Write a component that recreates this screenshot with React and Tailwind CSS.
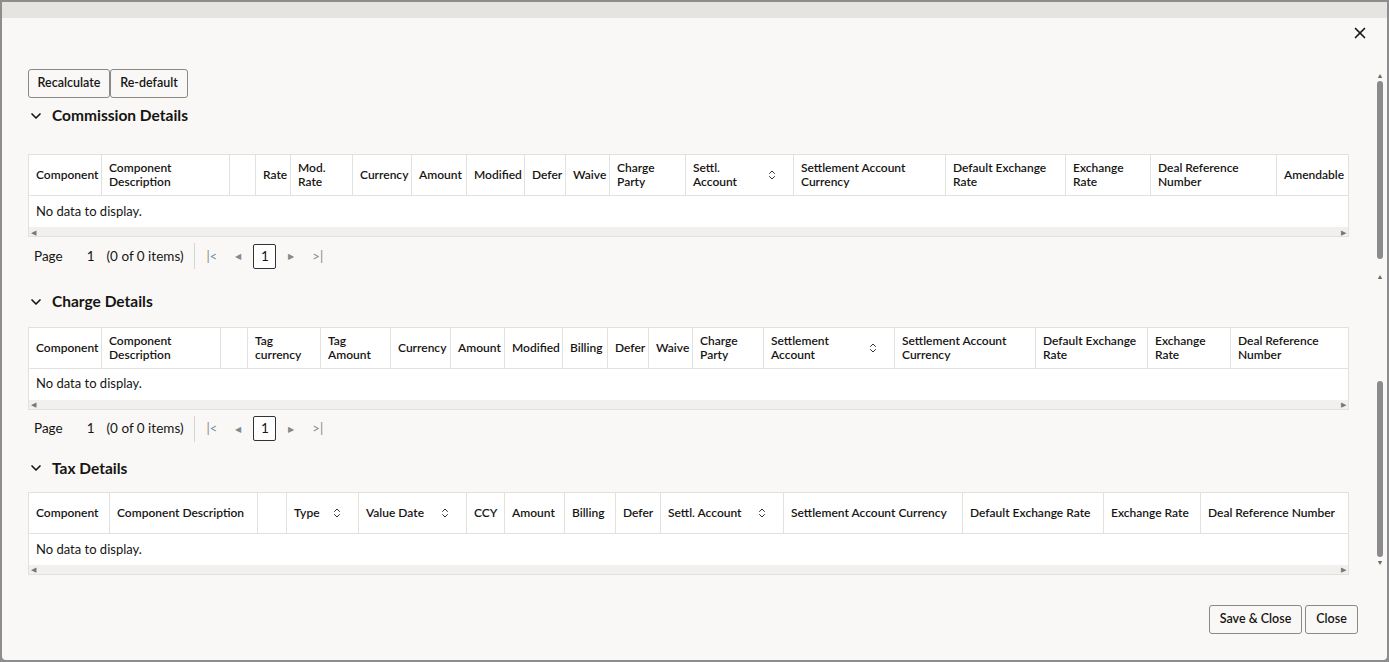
import { ChevronDown, X, ChevronsUpDown } from 'lucide-react'

const COMMISSION = [
  ['Component', 73], ['Component Description', 128], ['', 26], ['Rate', 35, 'r'], ['Mod. Rate', 62],
  ['Currency', 59], ['Amount', 55], ['Modified', 58], ['Defer', 41], ['Waive', 44],
  ['Charge Party', 76], ['Settl. Account', 108, 's'], ['Settlement Account Currency', 152],
  ['Default Exchange Rate', 120], ['Exchange Rate', 85], ['Deal Reference Number', 126], ['Amendable', 71],
]
const CHARGE = [
  ['Component', 73], ['Component Description', 119], ['', 27], ['Tag currency', 73], ['Tag Amount', 70],
  ['Currency', 60], ['Amount', 54], ['Modified', 58], ['Billing', 45], ['Defer', 41], ['Waive', 44],
  ['Charge Party', 71], ['Settlement Account', 131, 's'], ['Settlement Account Currency', 141],
  ['Default Exchange Rate', 112], ['Exchange Rate', 83], ['Deal Reference Number', 117],
]
const TAX = [
  ['Component', 81], ['Component Description', 148], ['', 29], ['Type', 72, 's'], ['Value Date', 108, 's'],
  ['CCY', 38], ['Amount', 60], ['Billing', 51], ['Defer', 45], ['Settl. Account', 123, 's'],
  ['Settlement Account Currency', 179], ['Default Exchange Rate', 141], ['Exchange Rate', 97],
  ['Deal Reference Number', 147],
]

function Grid({ cols, wrap }) {
  return (
    <div className="ml-[26px] w-[1321px] bg-white border border-[#e3e1de]">
      <div className="flex h-[41px] border-b border-[#e3e1de]">
        {cols.map(([label, w, f], i) => (
          <div key={i} style={{ width: w }}
            className={`shrink-0 flex items-center px-[7px] text-[12px] font-semibold leading-[14px] text-[#161513] ${i < cols.length - 1 ? 'border-r border-[#e3e1de]' : ''}`}>
            <span className={`${wrap ? '' : 'whitespace-nowrap'} flex-1 ${f === 'r' ? 'text-right' : ''}`}>{label}</span>
            {f === 's' && <ChevronsUpDown size={12} strokeWidth={2} className="text-[#333] mr-[8px]" />}
          </div>
        ))}
      </div>
      <div className="h-[31px] flex items-center px-[7px] text-[13px] text-[#161513]">No data to display.</div>
      <div className="h-[9px] bg-[#f1f0ee] flex items-center justify-between px-[2px] text-[7px] text-[#777]">
        <span>◀</span><span>▶</span>
      </div>
    </div>
  )
}

function Pager() {
  return (
    <div className="ml-[32px] mt-[6px] flex items-center h-[26px] text-[13.5px] text-[#161513]">
      <span>Page</span>
      <span className="ml-[24px]">1</span>
      <span className="ml-[12px] pr-[10px] border-r border-[#d6d4d1] h-[26px] flex items-center">(0 of 0 items)</span>
      <span className="ml-[12px] text-[#888] text-[13px]">|&lt;</span>
      <span className="ml-[18px] text-[#888] text-[8px]">◀</span>
      <span className="ml-[12px] w-[23px] h-[25px] border border-[#333] rounded-[2px] flex items-center justify-center bg-white">1</span>
      <span className="ml-[12px] text-[#888] text-[8px]">▶</span>
      <span className="ml-[18px] text-[#888] text-[13px]">&gt;|</span>
    </div>
  )
}

function Section({ title }) {
  return (
    <div className="ml-[26px] flex items-center gap-[8px] text-[15.5px] font-bold text-[#161513]">
      <ChevronDown size={16} strokeWidth={2.5} />
      <span>{title}</span>
    </div>
  )
}

const btn = 'h-[29px] border border-[#8b8986] rounded-[3px] bg-[#f9f8f6] text-[12.5px] font-semibold text-[#161513]'

export default function App() {
  return (
    <div className="w-[1389px] h-[662px] bg-[#8d8d8d] p-[2px] overflow-hidden" style={{ fontFamily: 'Lato, "Noto Sans", sans-serif' }}>
      <div className="h-[16px] bg-[#e6e4e1]" />
      <div className="relative h-[642px] bg-[#f9f8f6] rounded-b-[4px]">
        <button className="absolute right-[18px] top-[6px] text-[#161513]"><X size={18} strokeWidth={2.2} /></button>
        <div className="absolute right-[2px] top-[52px] w-[10px] h-[520px] flex flex-col items-center">
          <span className="text-[7px] text-[#666]">▲</span>
          <div className="w-[6px] h-[178px] rounded bg-[#8b8b8b]" />
          <span className="text-[7px] text-[#666] mt-[12px]">▲</span>
          <div className="w-[6px] h-[176px] rounded bg-[#8b8b8b] mt-[100px]" />
          <span className="text-[7px] text-[#666]">▼</span>
        </div>

        <div className="pt-[51px] ml-[26px] flex">
          <button className={`${btn} w-[82px]`}>Recalculate</button>
          <button className={`${btn} w-[78px]`}>Re-default</button>
        </div>
        <div className="mt-[6px]"><Section title="Commission Details" /></div>
        <div className="mt-[27px]"><Grid cols={COMMISSION} wrap /></div>
        <Pager />
        <div className="mt-[21px]"><Section title="Charge Details" /></div>
        <div className="mt-[13px]"><Grid cols={CHARGE} wrap /></div>
        <Pager />
        <div className="mt-[15px]"><Section title="Tax Details" /></div>
        <div className="mt-[12px]"><Grid cols={TAX} /></div>

        <div className="absolute right-[29px] bottom-[26px] flex gap-[3px]">
          <button className={`${btn} w-[93px]`}>Save &amp; Close</button>
          <button className={`${btn} w-[53px]`}>Close</button>
        </div>
      </div>
    </div>
  )
}
